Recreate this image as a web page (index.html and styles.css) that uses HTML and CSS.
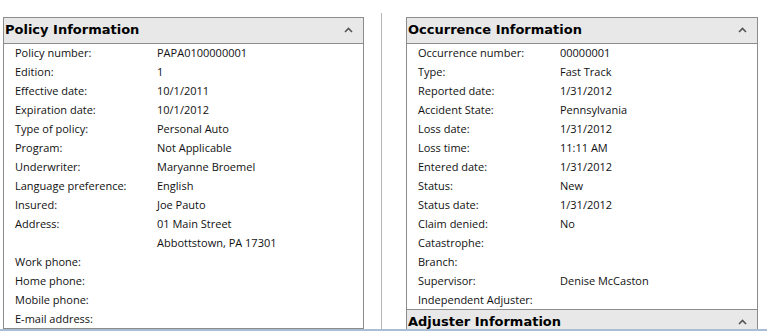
FILE: index.html
```html
<!DOCTYPE html>
<html lang="en">
<head>
    <meta charset="UTF-8">
    <title>Claim Summary</title>
    <link rel="stylesheet" href="styles.css">
</head>
<body>
    <div class="page">
        <!-- Left column -->
        <div class="col col-left">
            <section class="panel">
                <div class="panel-header">
                    <h2>Policy Information</h2>
                    <svg class="chevron" width="9" height="6" viewBox="0 0 9 6"><path d="M1 5 L4.5 1.5 L8 5" fill="none" stroke="#555" stroke-width="1.6"/></svg>
                </div>
                <div class="panel-body">
                    <div class="row"><span class="label">Policy number:</span><span class="value">PAPA0100000001</span></div>
                    <div class="row"><span class="label">Edition:</span><span class="value">1</span></div>
                    <div class="row"><span class="label">Effective date:</span><span class="value">10/1/2011</span></div>
                    <div class="row"><span class="label">Expiration date:</span><span class="value">10/1/2012</span></div>
                    <div class="row"><span class="label">Type of policy:</span><span class="value">Personal Auto</span></div>
                    <div class="row"><span class="label">Program:</span><span class="value">Not Applicable</span></div>
                    <div class="row"><span class="label">Underwriter:</span><span class="value">Maryanne Broemel</span></div>
                    <div class="row"><span class="label">Language preference:</span><span class="value">English</span></div>
                    <div class="row"><span class="label">Insured:</span><span class="value">Joe Pauto</span></div>
                    <div class="row"><span class="label">Address:</span><span class="value">01 Main Street<br>Abbottstown, PA 17301</span></div>
                    <div class="row"><span class="label">Work phone:</span><span class="value"></span></div>
                    <div class="row"><span class="label">Home phone:</span><span class="value"></span></div>
                    <div class="row"><span class="label">Mobile phone:</span><span class="value"></span></div>
                    <div class="row"><span class="label">E-mail address:</span><span class="value"></span></div>
                </div>
            </section>
        </div>

        <div class="divider"></div>

        <!-- Right column -->
        <div class="col col-right">
            <section class="panel">
                <div class="panel-header">
                    <h2>Occurrence Information</h2>
                    <svg class="chevron" width="9" height="6" viewBox="0 0 9 6"><path d="M1 5 L4.5 1.5 L8 5" fill="none" stroke="#555" stroke-width="1.6"/></svg>
                </div>
                <div class="panel-body">
                    <div class="row"><span class="label">Occurrence number:</span><span class="value">00000001</span></div>
                    <div class="row"><span class="label">Type:</span><span class="value">Fast Track</span></div>
                    <div class="row"><span class="label">Reported date:</span><span class="value">1/31/2012</span></div>
                    <div class="row"><span class="label">Accident State:</span><span class="value">Pennsylvania</span></div>
                    <div class="row"><span class="label">Loss date:</span><span class="value">1/31/2012</span></div>
                    <div class="row"><span class="label">Loss time:</span><span class="value">11:11 AM</span></div>
                    <div class="row"><span class="label">Entered date:</span><span class="value">1/31/2012</span></div>
                    <div class="row"><span class="label">Status:</span><span class="value">New</span></div>
                    <div class="row"><span class="label">Status date:</span><span class="value">1/31/2012</span></div>
                    <div class="row"><span class="label">Claim denied:</span><span class="value">No</span></div>
                    <div class="row"><span class="label">Catastrophe:</span><span class="value"></span></div>
                    <div class="row"><span class="label">Branch:</span><span class="value"></span></div>
                    <div class="row"><span class="label">Supervisor:</span><span class="value">Denise McCaston</span></div>
                    <div class="row"><span class="label">Independent Adjuster:</span><span class="value"></span></div>
                </div>
            </section>
            <section class="panel panel-next">
                <div class="panel-header">
                    <h2>Adjuster Information</h2>
                    <svg class="chevron" width="9" height="6" viewBox="0 0 9 6"><path d="M1 5 L4.5 1.5 L8 5" fill="none" stroke="#555" stroke-width="1.6"/></svg>
                </div>
            </section>
        </div>
    </div>
</body>
</html>
```

FILE: styles.css
```css
/* Claim summary panels */
:root {
    --border-color: #8c8c8c;
    --header-bg: #e8e8e8;
    --status-line: #a9bdd6;
}

* {
    box-sizing: border-box;
    margin: 0;
    padding: 0;
}

body {
    font-family: 'Open Sans', 'Noto Sans', sans-serif;
    font-size: 11px;
    color: #111;
    background: white;
    overflow: hidden;
}

.page {
    display: flex;
    align-items: flex-start;
    height: 331px;
    padding-top: 17px;
    overflow: hidden;
    border-bottom: 2px solid var(--status-line);
}

.col-left {
    width: 361px;
    margin-left: 3px;
}

.divider {
    align-self: stretch;
    width: 1px;
    margin-left: 17px;
    margin-top: -4px;
    background: #b5b5b5;
}

.col-right {
    width: 352px;
    margin-left: 24px;
}

/* Panel */
.panel {
    border: 1px solid var(--border-color);
    background: white;
}

.panel-next {
    border-top: none;
}

.panel-header {
    display: flex;
    justify-content: space-between;
    align-items: center;
    height: 26px;
    padding: 0 10px 2px 1px;
    background: var(--header-bg);
    border-bottom: 1px solid var(--border-color);
}

.panel-header h2 {
    font-family: 'DejaVu Sans', Verdana, sans-serif;
    font-size: 13px;
    font-weight: bold;
    color: #000;
}

.chevron {
    display: block;
}

.panel-body {
    padding-left: 11px;
    margin-top: -1px;
}

.row {
    display: flex;
    line-height: 19px;
}

.label {
    width: 142px;
    flex-shrink: 0;
}
```
